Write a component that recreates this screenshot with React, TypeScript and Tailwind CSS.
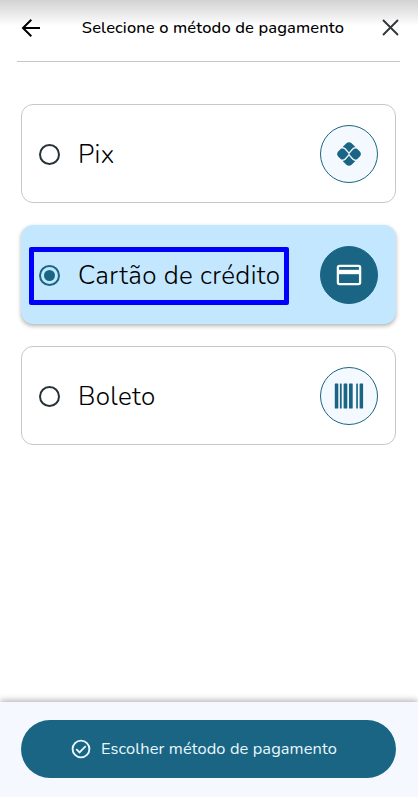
import { useState } from 'react';
import clsx from 'clsx';

type MethodId = 'pix' | 'card' | 'boleto';

function PixIcon() {
  return (
    <svg width="24" height="24" viewBox="0 0 24 24" fill="currentColor">
      <path d="M5.6 5.1 9.4 1.3Q12 -.9 14.6 1.3L18.4 5.1Q16.4 5.2 15.2 6.4L12 10.2 8.8 6.4Q7.6 5.2 5.6 5.1Z" />
      <path d="M5.6 18.9 9.4 22.7Q12 24.9 14.6 22.7L18.4 18.9Q16.4 18.8 15.2 17.6L12 13.8 8.8 17.6Q7.6 18.8 5.6 18.9Z" />
      <path d="M4.2 6.4H5.6Q6.8 6.4 7.8 7.4L11.2 11.3Q11.7 12 11.2 12.7L7.8 16.6Q6.8 17.6 5.6 17.6H4.2L1.2 14.6Q-1 12 1.2 9.4Z" />
      <path d="M19.8 6.4H18.4Q17.2 6.4 16.2 7.4L12.8 11.3Q12.3 12 12.8 12.7L16.2 16.6Q17.2 17.6 18.4 17.6H19.8L22.8 14.6Q25 12 22.8 9.4Z" />
    </svg>
  );
}

function CardIcon() {
  return (
    <svg width="26" height="22" viewBox="0 0 26 22" fill="none" stroke="currentColor" strokeWidth="2.3">
      <rect x="1.9" y="1.9" width="22.2" height="18.2" rx="1.6" />
      <path d="M2 8H24" strokeWidth="4.4" />
    </svg>
  );
}

function BarcodeIcon() {
  return (
    <svg width="30" height="26" viewBox="0 0 30 26" fill="currentColor">
      <rect x="0.8" y="0.5" width="3.5" height="25" rx="0.5" />
      <rect x="5.9" y="0.5" width="1.8" height="25" rx="0.5" />
      <rect x="9.6" y="0.5" width="3.7" height="25" rx="0.5" />
      <rect x="15" y="0.5" width="3.7" height="25" rx="0.5" />
      <rect x="22.2" y="0.5" width="1.7" height="25" rx="0.5" />
      <rect x="25.6" y="0.5" width="3.5" height="25" rx="0.5" />
    </svg>
  );
}

const METHODS = [
  { id: 'pix' as MethodId, label: 'Pix', icon: PixIcon },
  { id: 'card' as MethodId, label: 'Cartão de crédito', icon: CardIcon },
  { id: 'boleto' as MethodId, label: 'Boleto', icon: BarcodeIcon },
];

export default function App() {
  const [selected, setSelected] = useState<MethodId>('card');

  return (
    <div className="flex h-[799px] w-full flex-col overflow-hidden bg-white font-['Nunito','Lato',sans-serif] text-black">
      {/* Header */}
      <header className="bg-linear-to-b from-[#d2d2d2] to-white to-[26px] pr-[18px] pl-[17px]">
        <div className="flex h-[62px] items-center justify-between border-b border-[#c4c8c9] pr-px pb-[6px] pl-1">
          <button aria-label="Voltar" className="w-[20px]">
            <svg width="20" height="20" viewBox="0 0 20 20" fill="none" stroke="currentColor" strokeWidth="2">
              <path d="M19 10H2.3M10.3 1.8 2 10l8.3 8.2" />
            </svg>
          </button>
          <h1 className="pt-0.5 pl-[3px] text-[16.5px] font-medium tracking-[0.13px] whitespace-nowrap">
            Selecione o método de pagamento
          </h1>
          <button aria-label="Fechar" className="w-[17px] text-[#30373b]">
            <svg width="17" height="17" viewBox="0 0 17 17" fill="none" stroke="currentColor" strokeWidth="1.9">
              <path d="m1 1 15 15M16 1 1 16" />
            </svg>
          </button>
        </div>
      </header>

      {/* Payment methods */}
      <main className="flex flex-1 flex-col gap-[22px] pt-[42px] pr-[22px] pl-[21px]">
        {METHODS.map(({ id, label, icon: Icon }) => {
          const active = id === selected;
          return (
            <button
              key={id}
              role="radio"
              aria-checked={active}
              onClick={() => setSelected(id)}
              className={clsx(
                'flex h-[99px] items-center justify-between rounded-[12px] border pt-px pr-[17px] pl-[7px] text-left',
                active
                  ? 'border-[#c2e7ff] bg-[#c2e7ff] shadow-[0_2px_4px_rgba(0,0,0,0.3)]'
                  : 'border-[#c5c7c8] bg-white',
              )}
            >
              <span
                className={clsx(
                  'flex h-[58px] items-center gap-[18px] border-[5px] pl-[5px]',
                  active ? 'mt-[2px] w-[260px] rounded-[2px] border-[#0000ff] pb-[2px]' : 'border-transparent',
                )}
              >
                <span
                  className={clsx(
                    'flex size-[21px] shrink-0 items-center justify-center rounded-full border-2',
                    active ? 'border-[#1a6583]' : 'border-[#263238]',
                  )}
                >
                  {active && <span className="size-[11px] rounded-full bg-[#1a6583]" />}
                </span>
                <span className="text-[26px] font-light tracking-[0.35px] whitespace-nowrap">{label}</span>
              </span>
              <span
                className={clsx(
                  'flex size-[58px] shrink-0 items-center justify-center rounded-full border border-[#1a6583]',
                  active ? 'bg-[#1a6583] text-white' : 'bg-[#f3f9ff] text-[#1a6583]',
                )}
              >
                <Icon />
              </span>
            </button>
          );
        })}
      </main>

      {/* Footer */}
      <footer className="h-[97px] border-b-2 border-white bg-[#f5f9ff] pt-[18px] pr-[22px] pl-[21px] shadow-[0_-2px_6px_rgba(0,0,0,0.28)]">
        <button className="flex h-[58px] w-full items-center justify-center gap-[10px] rounded-full bg-[#1a6583] pr-[9px] text-[#e8f8ff]">
          <svg width="20" height="20" viewBox="0 0 20 20" fill="none" stroke="currentColor" strokeWidth="1.9">
            <circle cx="10" cy="10" r="8.4" />
            <path d="m5.3 10.2 3.2 3.2 6.2-6.2" />
          </svg>
          <span className="text-[16.4px] tracking-[0.1px] whitespace-nowrap">Escolher método de pagamento</span>
        </button>
      </footer>
    </div>
  );
}
